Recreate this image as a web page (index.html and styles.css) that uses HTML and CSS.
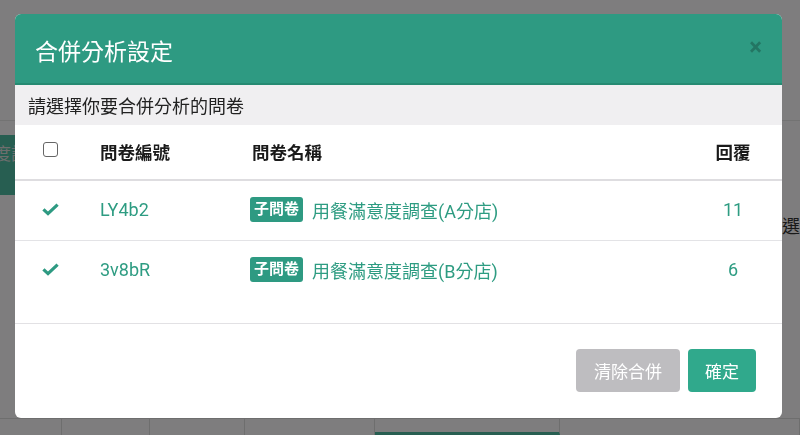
FILE: index.html
```html
<!DOCTYPE html>
<html lang="zh-Hant">
<head>
    <meta charset="UTF-8">
    <meta name="viewport" content="width=device-width, initial-scale=1.0">
    <title>合併分析設定</title>
    <link rel="stylesheet" href="styles.css">
</head>
<body>
    <!-- page behind the dialog -->
    <div class="page">
        <div class="page-top"></div>
        <div class="page-row">
            <span class="page-tag">滿意度設定</span>
        </div>
        <div class="page-row page-row-right">
            <span class="page-link">選擇</span>
        </div>
        <div class="page-grid">
            <div></div><div></div><div></div><div></div><div></div><div></div>
        </div>
    </div>

    <div class="mask">
        <div class="modal">
            <div class="modal-header">
                <h2 class="modal-title">合併分析設定</h2>
                <span class="close">&times;</span>
            </div>

            <div class="modal-body">
                <div class="hint">請選擇你要合併分析的問卷</div>

                <div class="survey-table">
                    <div class="tr th">
                        <div class="td col-check"><span class="checkbox"></span></div>
                        <div class="td">問卷編號</div>
                        <div class="td">問卷名稱</div>
                        <div class="td col-count">回覆</div>
                    </div>
                    <div class="tr">
                        <div class="td col-check">
                            <svg class="check" viewBox="0 0 17 13" width="17" height="13">
                                <path d="M1.4 6.4 L6 10.6 L15.6 1.6" fill="none" stroke="currentColor" stroke-width="3.2"/>
                            </svg>
                        </div>
                        <div class="td link">LY4b2</div>
                        <div class="td"><span class="badge">子問卷</span><span class="link">用餐滿意度調查(A分店)</span></div>
                        <div class="td col-count link">11</div>
                    </div>
                    <div class="tr">
                        <div class="td col-check">
                            <svg class="check" viewBox="0 0 17 13" width="17" height="13">
                                <path d="M1.4 6.4 L6 10.6 L15.6 1.6" fill="none" stroke="currentColor" stroke-width="3.2"/>
                            </svg>
                        </div>
                        <div class="td link">3v8bR</div>
                        <div class="td"><span class="badge">子問卷</span><span class="link">用餐滿意度調查(B分店)</span></div>
                        <div class="td col-count link">6</div>
                    </div>
                </div>
            </div>

            <div class="modal-footer">
                <button class="btn btn-gray">清除合併</button>
                <button class="btn btn-green">確定</button>
            </div>
        </div>
    </div>
</body>
</html>
```

FILE: styles.css
```css
body {
    margin: 0;
    width: 800px;
    height: 435px;
    overflow: hidden;
    font-family: Roboto, "Noto Sans CJK TC", sans-serif;
    background: #fdfafd;
    color: #222;
}

/* background page */
.page {
    height: 435px;
    display: flex;
    flex-direction: column;
}

.page-top {
    height: 120px;
    border-bottom: 1px solid #e6e6e6;
}

.page-row {
    height: 40px;
    display: flex;
    align-items: center;
    margin-top: 24px;
}

.page-tag {
    background: #4fbca2;
    color: #ddd;
    font-size: 17px;
    line-height: 22px;
    padding: 8px 0 8px 4px;
    margin-left: -44px;
    width: 80px;
}

.page-row-right {
    justify-content: flex-end;
    margin-top: 22px;
}

.page-link {
    font-size: 18px;
    line-height: 22px;
    color: #333;
    margin-right: -18px;
}

.page-grid {
    margin-top: auto;
    height: 16px;
    display: grid;
    grid-template-columns: 62px 88px 95px 130px 185px 1fr;
    border-top: 1px solid #dcdcdc;
}

.page-grid div {
    border-right: 1px solid #dcdcdc;
}

.page-grid div:nth-child(5) {
    border-bottom: 3px solid #4fbca2;
}

/* dialog */
.mask {
    position: fixed;
    inset: 0;
    background: rgba(0, 0, 0, 0.5);
}

.modal {
    width: 767px;
    margin: 14px 0 0 15px;
    background: #fff;
    border-radius: 6px;
    overflow: hidden;
}

.modal-header {
    height: 69px;
    background: #2e9a82;
    border-bottom: 2px solid #268a72;
    display: flex;
    align-items: center;
    padding: 0 20px;
}

.modal-title {
    margin: 0;
    flex: 1;
    color: #fff;
    font-size: 23px;
    font-weight: 400;
    padding-top: 2px;
}

.close {
    color: #1d5f50;
    opacity: 0.6;
    font-size: 24px;
    font-weight: 700;
    line-height: 1;
    margin-top: -4px;
}

.modal-body {
    padding-bottom: 23px;
    border-bottom: 1px solid #e2e1e4;
}

.hint {
    height: 40px;
    background: #f0eff1;
    display: flex;
    align-items: center;
    padding-left: 13px;
    font-size: 18px;
    color: #222;
}

.tr {
    display: grid;
    grid-template-columns: 85px 152px 1fr 66px;
    padding-right: 16px;
    height: 59px;
    align-items: center;
    font-size: 18px;
    border-bottom: 1px solid #e3e3e6;
}

.tr:last-child {
    border-bottom: none;
}

.th {
    height: 54px;
    border-bottom: 2px solid #dedde0;
    font-size: 17.5px;
    font-weight: 700;
    color: #1a1a1a;
}

.td {
    display: flex;
    align-items: center;
    padding-bottom: 2px;
}

.col-check {
    padding-left: 28px;
}

.col-count {
    justify-content: center;
}

.checkbox {
    width: 13px;
    height: 13px;
    border: 1.5px solid #666;
    border-radius: 3px;
    margin-top: -3px;
}

.check {
    color: #2e9a82;
    margin-left: -1px;
}

.link {
    color: #2e9c82;
}

.badge {
    background: #2e9a82;
    color: #fff;
    font-size: 15px;
    font-weight: 700;
    border-radius: 3px;
    padding: 3px 4px;
    margin: 0 9px 0 -2px;
    line-height: 19px;
}

.modal-footer {
    display: flex;
    justify-content: flex-end;
    gap: 8px;
    padding: 25px 26px 26px;
}

.btn {
    height: 43px;
    border: none;
    border-radius: 4px;
    color: #fff;
    font-family: "Noto Sans CJK TC", sans-serif;
    font-size: 17px;
    padding: 0;
}

.btn-gray {
    background: #bebdc0;
    width: 104px;
}

.btn-green {
    background: #30a98c;
    width: 68px;
}
```
